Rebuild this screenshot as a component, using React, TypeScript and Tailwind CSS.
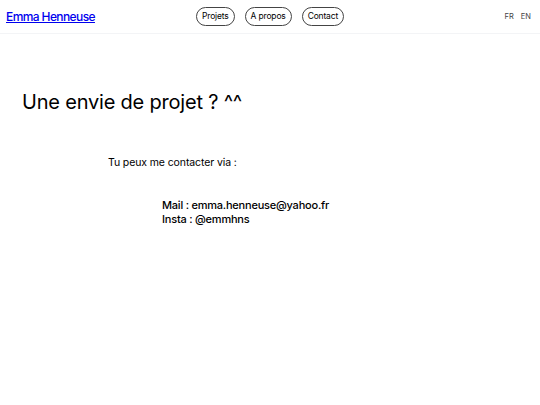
import React from 'react';

const font = { fontFamily: 'Inter, "Noto Sans", sans-serif' };

export default function App() {
  return (
    <div className="min-h-[405px] w-full bg-white text-black" style={font}>
      <header className="relative flex h-[34px] items-center justify-between border-b border-gray-100 px-[6px]">
        <a href="#" className="text-[12px] font-medium leading-[14px] tracking-[-0.05em] text-[#0000ee] underline">
          Emma Henneuse
        </a>
        <nav className="absolute left-1/2 top-[7px] flex -translate-x-1/2 gap-[10px]">
          {['Projets', 'A propos', 'Contact'].map((l) => (
            <span
              key={l}
              className="flex h-[19px] items-center rounded-full border border-[#444] px-[5px] text-[8.5px] tracking-[-0.02em]"
            >
              {l}
            </span>
          ))}
        </nav>
        <div className="flex gap-[7px] pr-[3px] text-[7.5px] text-[#444]">
          <span>FR</span>
          <span>EN</span>
        </div>
      </header>
      <main>
        <h1 className="pl-[22px] pt-[56px] text-[20px] font-normal leading-[24px] tracking-[-0.01em]">
          Une envie de projet ? ^^
        </h1>
        <p className="pl-[108px] pt-[42px] text-[10.5px] leading-[14px] tracking-[-0.01em]">Tu peux me contacter via :</p>
        <div className="pl-[162px] pt-[28px] text-[11px] font-medium leading-[14px] tracking-[-0.02em]">
          <p>Mail : emma.henneuse@yahoo.fr</p>
          <p>Insta : @emmhns</p>
        </div>
      </main>
    </div>
  );
}
